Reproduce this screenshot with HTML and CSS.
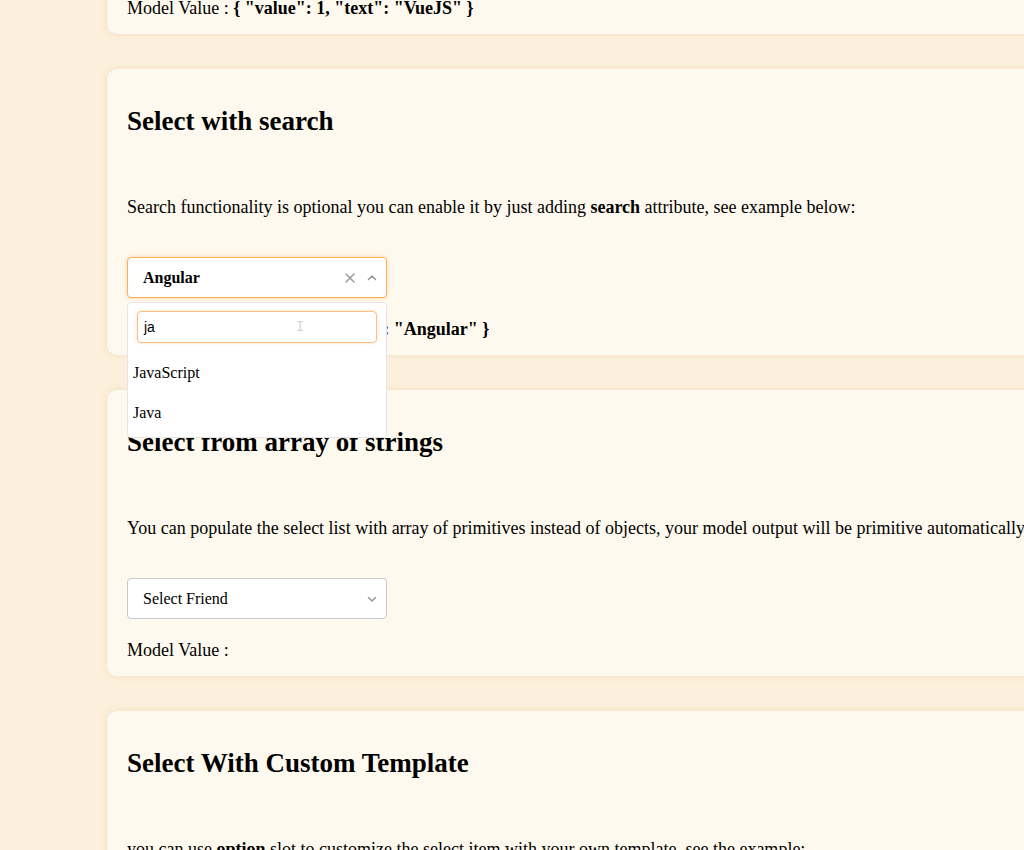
FILE: index.html
```html
<!DOCTYPE html>
<html>
<head>
<meta charset="utf-8">
<link rel="stylesheet" href="styles.css">
</head>
<body>
<main class="main">
  <section class="card card-first">
    <h2 class="card-title">Basic Select</h2>
    <p class="card-text">Select list from array of objects, each object must have <b>value</b> and <b>text</b> keys.</p>
    <div class="select">
      <div class="select-box">
        <span class="select-value">VueJS</span>
        <span class="select-icons">
          <svg class="ic" width="12" height="12" viewBox="0 0 12 12"><path d="M2.5 4.5 6 8l3.5-3.5" fill="none" stroke="#999" stroke-width="1.6" stroke-linecap="round" stroke-linejoin="round"/></svg>
        </span>
      </div>
    </div>
    <p class="model">Model Value : <b>{ "value": 1, "text": "VueJS" }</b></p>
  </section>

  <section class="card">
    <h2 class="card-title">Select with search</h2>
    <p class="card-text">Search functionality is optional you can enable it by just adding <b>search</b> attribute, see example below:</p>
    <div class="select">
      <div class="select-box is-open">
        <span class="select-value">Angular</span>
        <span class="select-icons">
          <svg class="ic" width="12" height="12" viewBox="0 0 12 12"><path d="M2 2l8 8M10 2l-8 8" fill="none" stroke="#999" stroke-width="1.5" stroke-linecap="round"/></svg>
          <svg class="ic" width="12" height="12" viewBox="0 0 12 12"><path d="M2.5 7.5 6 4l3.5 3.5" fill="none" stroke="#999" stroke-width="1.6" stroke-linecap="round" stroke-linejoin="round"/></svg>
        </span>
      </div>
      <div class="dropdown">
        <div class="search-wrap">
          <div class="search">ja<span class="ibeam">I</span></div>
        </div>
        <ul class="options">
          <li class="option">JavaScript</li>
          <li class="option">Java</li>
        </ul>
      </div>
    </div>
    <p class="model">Model Value : <b>{ "value": 2, "text": "Angular" }</b></p>
  </section>

  <section class="card">
    <h2 class="card-title">Select from array of strings</h2>
    <p class="card-text">You can populate the select list with array of primitives instead of objects, your model output will be primitive automatically.</p>
    <div class="select">
      <div class="select-box">
        <span class="select-placeholder">Select Friend</span>
        <span class="select-icons">
          <svg class="ic" width="12" height="12" viewBox="0 0 12 12"><path d="M2.5 4.5 6 8l3.5-3.5" fill="none" stroke="#999" stroke-width="1.6" stroke-linecap="round" stroke-linejoin="round"/></svg>
        </span>
      </div>
    </div>
    <p class="model">Model Value : </p>
  </section>

  <section class="card">
    <h2 class="card-title">Select With Custom Template</h2>
    <p class="card-text">you can use <b>option</b> slot to customize the select item with your own template, see the example:</p>
    <div class="select">
      <div class="select-box">
        <span class="select-placeholder">Select Language</span>
      </div>
    </div>
  </section>
</main>
</body>
</html>
```

FILE: styles.css
```css
html, body {
  margin: 0;
  padding: 0;
  overflow: hidden;
  height: 850px;
}
body {
  background: #fcefdb;
  font-family: "Liberation Serif", "Times New Roman", serif;
  color: #000;
}
.main {
  padding-left: 107px;
  display: flex;
  flex-direction: column;
  gap: 35px;
}
.card {
  width: 1100px;
  box-sizing: border-box;
  background: #fef9ee;
  border-radius: 10px;
  box-shadow: 0 0 6px rgba(214, 180, 130, 0.28);
  padding: 20px 20px 17px;
  position: relative;
}
.card-first {
  margin-top: -252px;
}
.card-title {
  margin: 18px 0 0;
  font-size: 27px;
  line-height: 28px;
  font-weight: bold;
}
.card-text {
  margin: 63px 0 0;
  font-size: 18px;
  line-height: 18px;
  white-space: nowrap;
}
.select {
  margin-top: 41px;
  width: 260px;
  position: relative;
}
.select-box {
  box-sizing: border-box;
  height: 41px;
  background: #fff;
  border: 1px solid #c9c9c9;
  border-radius: 4px;
  display: flex;
  align-items: center;
  padding: 0 8px 0 15px;
  font-size: 16px;
}
.select-box.is-open {
  border-color: #ffae5a;
  box-shadow: 0 0 4px rgba(255, 170, 80, 0.45);
}
.select-value {
  font-weight: bold;
  flex: 1;
}
.select-placeholder {
  flex: 1;
}
.select-icons {
  display: flex;
  align-items: center;
  gap: 10px;
}
.ic {
  display: block;
}
.dropdown {
  position: absolute;
  left: 0;
  top: 45px;
  width: 260px;
  box-sizing: border-box;
  background: #fff;
  border: 1px solid #e6e6e6;
  border-radius: 4px;
  z-index: 5;
  padding-bottom: 4px;
}
.search-wrap {
  padding: 8px 9px 10px;
}
.search {
  box-sizing: border-box;
  height: 32px;
  border: 1px solid #ffbf80;
  border-radius: 4px;
  box-shadow: 0 0 3px rgba(255, 170, 80, 0.4);
  display: flex;
  align-items: center;
  padding-left: 6px;
  font-family: "Liberation Sans", Arial, sans-serif;
  font-size: 14px;
  position: relative;
}
.ibeam {
  position: absolute;
  left: 158px;
  top: 6px;
  color: #d6d6d6;
  font-family: "DejaVu Sans Mono", monospace;
  font-size: 14px;
  font-weight: 300;
}
.options {
  list-style: none;
  margin: 0;
  padding: 0;
}
.option {
  height: 40px;
  line-height: 40px;
  padding-left: 5px;
  font-size: 16px;
}
.model {
  margin: 22px 0 0;
  font-size: 18px;
  line-height: 18px;
  white-space: nowrap;
}
```
